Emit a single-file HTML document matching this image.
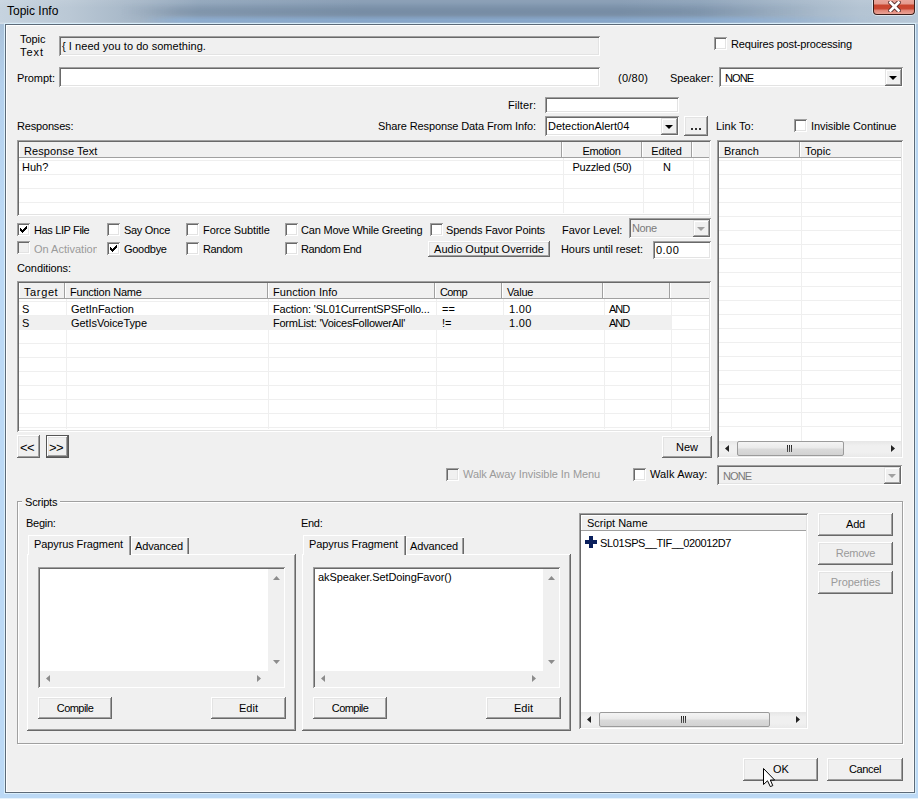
<!DOCTYPE html>
<html><head><meta charset="utf-8">
<style>
*{margin:0;padding:0;box-sizing:border-box}
html,body{width:918px;height:799px;overflow:hidden;background:#a9c4e0}
body{position:relative;font-family:"Liberation Sans",sans-serif;font-size:11px;color:#000}
.a{position:absolute}
.t{position:absolute;white-space:nowrap;line-height:13px;font-size:11px;color:#000}
.t.dis{color:#9a9a9a}
.t.gt{color:#7a7a7a}
.sunk{position:absolute;background:#fff;box-shadow:inset 1px 1px 0 #a0a0a0,inset -1px -1px 0 #fff,inset 2px 2px 0 #696969,inset -2px -2px 0 #e3e3e3}
.btn{position:absolute;background:#f0f0f0;box-shadow:inset -1px -1px 0 #696969,inset 1px 1px 0 #fff,inset -2px -2px 0 #a0a0a0,inset 2px 2px 0 #e3e3e3}
.btn.def{box-shadow:inset -1px -1px 0 #555,inset 1px 1px 0 #555,inset -2px -2px 0 #696969,inset 2px 2px 0 #fff,inset -3px -3px 0 #a0a0a0,inset 3px 3px 0 #e3e3e3}
.cb{position:absolute;width:13px;height:13px;background:#fff;box-shadow:inset 1px 1px 0 #a0a0a0,inset -1px -1px 0 #fff,inset 2px 2px 0 #696969,inset -2px -2px 0 #e3e3e3}
.cb.d{background:#f0f0f0}
.ddb{position:absolute;background:#f0f0f0;box-shadow:inset -1px -1px 0 #696969,inset 1px 1px 0 #e3e3e3,inset -2px -2px 0 #a0a0a0,inset 2px 2px 0 #fff}
.arr{position:absolute;width:0;height:0;border-left:4px solid transparent;border-right:4px solid transparent;border-top:4px solid #000}
.gh{position:absolute;height:1px;background:#efefef}
.gv{position:absolute;width:1px;background:#efefef}
.raised{position:absolute;box-shadow:inset -1px -1px 0 #696969,inset 1px 1px 0 #fff,inset -2px -2px 0 #a0a0a0}
</style></head><body>

<div class="a" style="left:0;top:0;width:918px;height:24px;background:linear-gradient(90deg,#c6d3df 0px,#bac8d5 70px,#a4b5c6 140px,#8ea3b9 200px,#8399b1 360px,#8399b1 620px,#8aa0b7 700px,#9fb2c5 780px,#b4c4d3 860px,#b6c7d7 918px)"></div>
<div class="a" style="left:120px;top:3px;width:730px;height:17px;background:linear-gradient(90deg,rgba(50,70,95,0) 0px,rgba(50,70,95,0.14) 60px,rgba(50,70,95,0.14) 560px,rgba(50,70,95,0) 700px);-webkit-mask-image:linear-gradient(180deg,transparent,#000 45%,#000 60%,transparent)"></div>
<div class="a" style="left:140px;top:15px;width:770px;height:9px;background:linear-gradient(90deg,rgba(140,180,225,0) 0px,rgba(140,180,225,0.5) 40px,rgba(140,180,225,0.5) 600px,rgba(140,180,225,0) 740px);-webkit-mask-image:linear-gradient(180deg,transparent,#000 50%,#000 80%,transparent)"></div>
<div class="a" style="left:0;top:0;width:918px;height:24px;background:linear-gradient(180deg,rgba(255,255,255,0.08) 0px,rgba(255,255,255,0) 8px,rgba(255,255,255,0) 22px,rgba(255,255,255,0.25) 23px)"></div>
<div class="t" style="left:7px;top:4px;font-size:12px;line-height:15px">Topic Info</div>
<div class="a" style="left:872px;top:-1px;width:44px;height:17px;border-radius:0 0 5px 5px;background:rgba(255,255,255,0.55)"></div>
<div class="a" style="left:873px;top:-1px;width:42px;height:16px;border:1px solid #3a1c18;border-top:none;border-radius:0 0 4px 4px;background:linear-gradient(180deg,#eba99e 0px,#e49a8e 5px,#c9452e 6px,#cb4833 10px,#df8272 11px,#eba396 15px)"></div>
<svg class="a" style="left:888px;top:1px" width="13" height="11" viewBox="0 0 13 11"><path d="M2.5 1.5 L10.5 9.5 M10.5 1.5 L2.5 9.5" stroke="#4a2020" stroke-width="4.4" stroke-linecap="square"/><path d="M2.5 1.5 L10.5 9.5 M10.5 1.5 L2.5 9.5" stroke="#fff" stroke-width="2.8" stroke-linecap="square"/></svg>
<div class="a" style="left:0;top:24px;width:918px;height:775px;background:linear-gradient(180deg,#aac2da 0px,#b4d0ec 60px,#bcd9f5 200px,#bcd9f5 775px)"></div>
<div class="a" style="left:4px;top:23px;width:912px;height:771px;border:1px solid #d9eefb"></div>
<div class="a" style="left:0;top:798px;width:918px;height:1px;background:#e6f3fc"></div>
<div class="a" style="left:5px;top:24px;width:910px;height:769px;background:#f0f0f0;border:1px solid #5c6a78;box-shadow:inset 1px 1px 0 #fff,inset -1px -1px 0 #fafafa"></div>
<div class="t " style="left:20px;top:33px;letter-spacing:-0.05px">Topic</div>
<div class="t " style="left:20px;top:46px;letter-spacing:0.94px">Text</div>
<div class="sunk" style="left:59px;top:36px;width:541px;height:20px;background:#f0f0f0;"></div>
<div class="t " style="left:62px;top:40px;letter-spacing:0.05px">{ I need you to do something.</div>
<div class="cb" style="left:714px;top:37px"></div>
<div class="t " style="left:731px;top:38px;letter-spacing:-0.16px">Requires post-processing</div>
<div class="t " style="left:17px;top:72px;letter-spacing:-0.09px">Prompt:</div>
<div class="sunk" style="left:59px;top:67px;width:541px;height:20px;background:#fff;"></div>
<div class="t " style="left:618px;top:72px;letter-spacing:0.25px">(0/80)</div>
<div class="t " style="left:670px;top:72px;letter-spacing:-0.08px">Speaker:</div>
<div class="sunk" style="left:719px;top:67px;width:184px;height:20px;background:#fff;"></div>
<div class="t " style="left:725px;top:72px;letter-spacing:-0.93px">NONE</div>
<div class="ddb" style="left:885px;top:69px;width:17px;height:17px"></div>
<div class="arr" style="left:889px;top:76px;border-top-color:#000"></div>
<div class="t " style="left:508px;top:99px;letter-spacing:0.08px">Filter:</div>
<div class="sunk" style="left:545px;top:97px;width:134px;height:16px;background:#fff;"></div>
<div class="t " style="left:17px;top:120px;letter-spacing:-0.18px">Responses:</div>
<div class="t " style="left:378px;top:120px;letter-spacing:-0.12px">Share Response Data From Info:</div>
<div class="sunk" style="left:545px;top:116px;width:134px;height:20px;background:#fff;"></div>
<div class="t " style="left:548px;top:120px;">DetectionAlert04</div>
<div class="ddb" style="left:661px;top:118px;width:17px;height:17px"></div>
<div class="arr" style="left:665px;top:125px;border-top-color:#000"></div>
<div class="btn" style="left:684px;top:116px;width:24px;height:20px"></div>
<div class="a" style="left:691px;top:128px;width:2px;height:2px;background:#333"></div>
<div class="a" style="left:695px;top:128px;width:2px;height:2px;background:#333"></div>
<div class="a" style="left:699px;top:128px;width:2px;height:2px;background:#333"></div>
<div class="t " style="left:716px;top:120px;">Link To:</div>
<div class="cb" style="left:794px;top:119px"></div>
<div class="t " style="left:811px;top:120px;letter-spacing:-0.08px">Invisible Continue</div>
<div class="sunk" style="left:17px;top:140px;width:694px;height:76px;background:#fff;"></div>
<div class="gh" style="left:19px;top:160px;width:690px"></div>
<div class="gh" style="left:19px;top:174px;width:690px"></div>
<div class="gh" style="left:19px;top:188px;width:690px"></div>
<div class="gh" style="left:19px;top:202px;width:690px"></div>
<div class="gv" style="left:563px;top:158px;height:55px"></div>
<div class="gv" style="left:643px;top:158px;height:55px"></div>
<div class="gv" style="left:693px;top:158px;height:55px"></div>
<div class="a" style="left:19px;top:142px;width:690px;height:16px;background:#f0f0f0;border-bottom:1px solid #a0a0a0;overflow:hidden">
<div class="a" style="left:0px;top:0;width:543px;height:15px;box-shadow:inset 1px 0 0 #fff,inset -1px 0 0 #a0a0a0"></div>
<div class="a" style="left:543px;top:0;width:80px;height:15px;box-shadow:inset 1px 0 0 #fff,inset -1px 0 0 #a0a0a0"></div>
<div class="a" style="left:623px;top:0;width:50px;height:15px;box-shadow:inset 1px 0 0 #fff,inset -1px 0 0 #a0a0a0"></div>
<div class="a" style="left:673px;top:0;width:21px;height:15px;box-shadow:inset 1px 0 0 #fff,inset -1px 0 0 #a0a0a0"></div>
</div>
<div class="t " style="left:24px;top:145px;letter-spacing:0.07px">Response Text</div>
<div class="t " style="left:562px;width:79px;text-align:center;top:145px;letter-spacing:-0.33px;padding-left:-0.33px">Emotion</div>
<div class="t " style="left:642px;width:49px;text-align:center;top:145px;letter-spacing:-0.10px;padding-left:-0.10px">Edited</div>
<div class="t " style="left:22px;top:161px;">Huh?</div>
<div class="t " style="left:562px;width:80px;text-align:center;top:161px;letter-spacing:-0.22px;padding-left:-0.22px">Puzzled (50)</div>
<div class="t " style="left:642px;width:50px;text-align:center;top:161px;">N</div>
<div class="sunk" style="left:717px;top:140px;width:186px;height:318px;background:#fff;"></div>
<div class="gh" style="left:719px;top:160px;width:182px"></div>
<div class="gh" style="left:719px;top:174px;width:182px"></div>
<div class="gh" style="left:719px;top:188px;width:182px"></div>
<div class="gh" style="left:719px;top:202px;width:182px"></div>
<div class="gh" style="left:719px;top:216px;width:182px"></div>
<div class="gh" style="left:719px;top:230px;width:182px"></div>
<div class="gh" style="left:719px;top:244px;width:182px"></div>
<div class="gh" style="left:719px;top:258px;width:182px"></div>
<div class="gh" style="left:719px;top:272px;width:182px"></div>
<div class="gh" style="left:719px;top:286px;width:182px"></div>
<div class="gh" style="left:719px;top:300px;width:182px"></div>
<div class="gh" style="left:719px;top:314px;width:182px"></div>
<div class="gh" style="left:719px;top:328px;width:182px"></div>
<div class="gh" style="left:719px;top:342px;width:182px"></div>
<div class="gh" style="left:719px;top:356px;width:182px"></div>
<div class="gh" style="left:719px;top:370px;width:182px"></div>
<div class="gh" style="left:719px;top:384px;width:182px"></div>
<div class="gh" style="left:719px;top:398px;width:182px"></div>
<div class="gh" style="left:719px;top:412px;width:182px"></div>
<div class="gh" style="left:719px;top:426px;width:182px"></div>
<div class="gv" style="left:801px;top:158px;height:283px"></div>
<div class="a" style="left:719px;top:142px;width:182px;height:16px;background:#f0f0f0;border-bottom:1px solid #a0a0a0;overflow:hidden">
<div class="a" style="left:0px;top:0;width:81px;height:15px;box-shadow:inset 1px 0 0 #fff,inset -1px 0 0 #a0a0a0"></div>
<div class="a" style="left:81px;top:0;width:105px;height:15px;box-shadow:inset 1px 0 0 #fff,inset -1px 0 0 #a0a0a0"></div>
</div>
<div class="t " style="left:724px;top:145px;">Branch</div>
<div class="t " style="left:805px;top:145px;">Topic</div>
<div class="a" style="left:719px;top:441px;width:182px;height:16px;background:linear-gradient(180deg,#e6e6e6,#f0f0f0 30%,#f0f0f0 70%,#e9e9e9)"></div>
<svg class="a" style="left:725px;top:445px" width="4" height="7"><path d="M4 0 L0 3.5 L4 7 Z" fill="#222"/></svg>
<svg class="a" style="left:891px;top:445px" width="4" height="7"><path d="M0 0 L4 3.5 L0 7 Z" fill="#222"/></svg>
<div class="a" style="left:737px;top:441px;width:107px;height:15px;border:1px solid #9b9b9b;border-radius:2px;background:linear-gradient(180deg,#f4f4f4,#eaeaea 45%,#dadada 55%,#d2d2d2)"></div>
<div class="a" style="left:787px;top:445px;width:1px;height:7px;background:linear-gradient(180deg,#222,#555)"></div>
<div class="a" style="left:789px;top:445px;width:1px;height:7px;background:linear-gradient(180deg,#222,#555)"></div>
<div class="a" style="left:791px;top:445px;width:1px;height:7px;background:linear-gradient(180deg,#222,#555)"></div>
<div class="cb" style="left:17px;top:223px"></div>
<svg class="a" style="left:20px;top:226px" width="7" height="7" viewBox="0 0 7 7" shape-rendering="crispEdges"><path d="M6 0h1v3h-1z M5 1h1v3h-1z M4 2h1v3h-1z M3 3h1v3h-1z M2 4h1v3h-1z M1 3h1v3h-1z M0 2h1v3h-1z" fill="#000"/></svg>
<div class="t " style="left:34px;top:224px;letter-spacing:-0.37px">Has LIP File</div>
<div class="cb" style="left:107px;top:223px"></div>
<div class="t " style="left:124px;top:224px;letter-spacing:-0.29px">Say Once</div>
<div class="cb" style="left:186px;top:223px"></div>
<div class="t " style="left:203px;top:224px;letter-spacing:-0.08px">Force Subtitle</div>
<div class="cb" style="left:285px;top:223px"></div>
<div class="t " style="left:301px;top:224px;letter-spacing:-0.20px">Can Move While Greeting</div>
<div class="cb" style="left:430px;top:223px"></div>
<div class="t " style="left:446px;top:224px;letter-spacing:-0.17px">Spends Favor Points</div>
<div class="t " style="left:562px;top:224px;letter-spacing:-0.01px">Favor Level:</div>
<div class="sunk" style="left:629px;top:218px;width:82px;height:20px;background:#f0f0f0;"></div>
<div class="t gt" style="left:632px;top:222px;letter-spacing:-0.43px">None</div>
<div class="ddb" style="left:693px;top:220px;width:17px;height:17px"></div>
<div class="arr" style="left:697px;top:227px;border-top-color:#a0a0a0"></div>
<div class="cb d" style="left:17px;top:241px"></div>
<div class="t dis" style="left:34px;top:243px;width:63px;overflow:hidden;">On Activation</div>
<div class="cb" style="left:107px;top:242px"></div>
<svg class="a" style="left:110px;top:245px" width="7" height="7" viewBox="0 0 7 7" shape-rendering="crispEdges"><path d="M6 0h1v3h-1z M5 1h1v3h-1z M4 2h1v3h-1z M3 3h1v3h-1z M2 4h1v3h-1z M1 3h1v3h-1z M0 2h1v3h-1z" fill="#000"/></svg>
<div class="t " style="left:124px;top:243px;letter-spacing:-0.28px">Goodbye</div>
<div class="cb" style="left:186px;top:242px"></div>
<div class="t " style="left:203px;top:243px;letter-spacing:-0.40px">Random</div>
<div class="cb" style="left:285px;top:242px"></div>
<div class="t " style="left:301px;top:243px;letter-spacing:-0.39px">Random End</div>
<div class="btn" style="left:428px;top:241px;width:122px;height:16px"></div>
<div class="t " style="left:428px;width:122px;text-align:center;top:243px;letter-spacing:0.02px;padding-left:0.02px">Audio Output Override</div>
<div class="t " style="left:561px;top:243px;letter-spacing:-0.07px">Hours until reset:</div>
<div class="sunk" style="left:653px;top:241px;width:58px;height:18px;background:#fff;"></div>
<div class="t " style="left:656px;top:244px;letter-spacing:0.46px">0.00</div>
<div class="t " style="left:17px;top:262px;letter-spacing:-0.10px">Conditions:</div>
<div class="sunk" style="left:17px;top:281px;width:694px;height:151px;background:#fff;"></div>
<div class="gh" style="left:19px;top:301px;width:690px"></div>
<div class="gh" style="left:19px;top:315px;width:690px"></div>
<div class="gh" style="left:19px;top:329px;width:690px"></div>
<div class="gh" style="left:19px;top:343px;width:690px"></div>
<div class="gh" style="left:19px;top:357px;width:690px"></div>
<div class="gh" style="left:19px;top:371px;width:690px"></div>
<div class="gh" style="left:19px;top:385px;width:690px"></div>
<div class="gh" style="left:19px;top:399px;width:690px"></div>
<div class="gh" style="left:19px;top:413px;width:690px"></div>
<div class="gh" style="left:19px;top:427px;width:690px"></div>
<div class="gv" style="left:66px;top:299px;height:130px"></div>
<div class="gv" style="left:268px;top:299px;height:130px"></div>
<div class="gv" style="left:436px;top:299px;height:130px"></div>
<div class="gv" style="left:503px;top:299px;height:130px"></div>
<div class="gv" style="left:604px;top:299px;height:130px"></div>
<div class="gv" style="left:671px;top:299px;height:130px"></div>
<div class="a" style="left:19px;top:316px;width:652px;height:14px;background:#f0f0f0"></div>
<div class="a" style="left:19px;top:283px;width:690px;height:16px;background:#f0f0f0;border-bottom:1px solid #a0a0a0;overflow:hidden">
<div class="a" style="left:0px;top:0;width:46px;height:15px;box-shadow:inset 1px 0 0 #fff,inset -1px 0 0 #a0a0a0"></div>
<div class="a" style="left:46px;top:0;width:203px;height:15px;box-shadow:inset 1px 0 0 #fff,inset -1px 0 0 #a0a0a0"></div>
<div class="a" style="left:249px;top:0;width:167px;height:15px;box-shadow:inset 1px 0 0 #fff,inset -1px 0 0 #a0a0a0"></div>
<div class="a" style="left:416px;top:0;width:67px;height:15px;box-shadow:inset 1px 0 0 #fff,inset -1px 0 0 #a0a0a0"></div>
<div class="a" style="left:483px;top:0;width:101px;height:15px;box-shadow:inset 1px 0 0 #fff,inset -1px 0 0 #a0a0a0"></div>
<div class="a" style="left:584px;top:0;width:67px;height:15px;box-shadow:inset 1px 0 0 #fff,inset -1px 0 0 #a0a0a0"></div>
<div class="a" style="left:651px;top:0;width:43px;height:15px;box-shadow:inset 1px 0 0 #fff,inset -1px 0 0 #a0a0a0"></div>
</div>
<div class="t " style="left:24px;top:286px;letter-spacing:0.62px">Target</div>
<div class="t " style="left:70px;top:286px;letter-spacing:-0.23px">Function Name</div>
<div class="t " style="left:273px;top:286px;letter-spacing:0.07px">Function Info</div>
<div class="t " style="left:440px;top:286px;letter-spacing:-0.61px">Comp</div>
<div class="t " style="left:507px;top:286px;letter-spacing:-0.21px">Value</div>
<div class="t " style="left:22px;top:303px;">S</div>
<div class="t " style="left:71px;top:303px;letter-spacing:0.00px">GetInFaction</div>
<div class="t " style="left:273px;top:303px;letter-spacing:-0.16px">Faction: 'SL01CurrentSPSFollo...</div>
<div class="t " style="left:442px;top:303px;">==</div>
<div class="t " style="left:509px;top:303px;letter-spacing:0.29px">1.00</div>
<div class="t " style="left:609px;top:303px;letter-spacing:-0.97px">AND</div>
<div class="t " style="left:22px;top:317px;">S</div>
<div class="t " style="left:71px;top:317px;letter-spacing:-0.08px">GetIsVoiceType</div>
<div class="t " style="left:273px;top:317px;letter-spacing:-0.25px">FormList: 'VoicesFollowerAll'</div>
<div class="t " style="left:442px;top:317px;">!=</div>
<div class="t " style="left:509px;top:317px;letter-spacing:0.29px">1.00</div>
<div class="t " style="left:609px;top:317px;letter-spacing:-0.97px">AND</div>
<div class="btn" style="left:17px;top:435px;width:23px;height:23px"></div>
<div class="t " style="left:17px;width:23px;text-align:center;top:441px;"></div>
<div class="t " style="left:20px;top:441px;font-size:13px;letter-spacing:-0.5px;">&lt;&lt;</div>
<div class="btn def" style="left:46px;top:435px;width:23px;height:23px"></div>
<div class="t " style="left:46px;width:23px;text-align:center;top:441px;"></div>
<div class="t " style="left:49px;top:441px;font-size:13px;letter-spacing:-0.5px;">&gt;&gt;</div>
<div class="btn" style="left:662px;top:436px;width:50px;height:22px"></div>
<div class="t " style="left:662px;width:50px;text-align:center;top:441px;">New</div>
<div class="cb d" style="left:446px;top:468px"></div>
<div class="t dis" style="left:463px;top:468px;letter-spacing:-0.06px">Walk Away Invisible In Menu</div>
<div class="cb" style="left:633px;top:468px"></div>
<div class="t " style="left:650px;top:468px;letter-spacing:0.13px">Walk Away:</div>
<div class="sunk" style="left:717px;top:465px;width:185px;height:20px;background:#f0f0f0;"></div>
<div class="t gt" style="left:723px;top:470px;letter-spacing:-0.93px">NONE</div>
<div class="ddb" style="left:884px;top:467px;width:17px;height:17px"></div>
<div class="arr" style="left:888px;top:474px;border-top-color:#a0a0a0"></div>
<div class="a" style="left:17px;top:501px;width:886px;height:243px;border:1px solid #a0a0a0;box-shadow:1px 1px 0 #fff,inset 1px 1px 0 #fff"></div>
<div class="a" style="left:22px;top:495px;width:38px;height:13px;background:#f0f0f0"></div>
<div class="t " style="left:25px;top:496px;letter-spacing:-0.20px">Scripts</div>
<div class="t " style="left:26px;top:517px;letter-spacing:-0.28px">Begin:</div>
<div class="raised" style="left:27px;top:554px;width:269px;height:177px;background:#f0f0f0"></div>
<div class="a" style="left:28px;top:535px;width:103px;height:20px;background:#f0f0f0;box-shadow:inset 1px 1px 0 #fff,inset -1px 0 0 #696969,inset -2px 0 0 #a0a0a0"></div>
<div class="t " style="left:34px;top:538px;letter-spacing:-0.10px">Papyrus Fragment</div>
<div class="a" style="left:131px;top:537px;width:58px;height:17px;background:#f0f0f0;box-shadow:inset 1px 1px 0 #fff,inset -1px 0 0 #696969,inset -2px 0 0 #a0a0a0"></div>
<div class="t " style="left:135px;top:540px;letter-spacing:-0.13px">Advanced</div>
<div class="sunk" style="left:38px;top:567px;width:247px;height:121px;background:#fff;"></div>
<div class="a" style="left:268px;top:569px;width:16px;height:102px;background:#f0f0f0"></div>
<svg class="a" style="left:273px;top:576px" width="7" height="4"><path d="M0 4 L3.5 0 L7 4 Z" fill="#8c8c8c"/></svg>
<svg class="a" style="left:273px;top:660px" width="7" height="4"><path d="M0 0 L3.5 4 L7 0 Z" fill="#8c8c8c"/></svg>
<div class="a" style="left:40px;top:671px;width:244px;height:16px;background:#f0f0f0"></div>
<svg class="a" style="left:46px;top:675px" width="4" height="7"><path d="M4 0 L0 3.5 L4 7 Z" fill="#8c8c8c"/></svg>
<svg class="a" style="left:257px;top:675px" width="4" height="7"><path d="M0 0 L4 3.5 L0 7 Z" fill="#8c8c8c"/></svg>
<div class="btn" style="left:38px;top:697px;width:74px;height:22px"></div>
<div class="t " style="left:38px;width:74px;text-align:center;top:702px;letter-spacing:-0.56px;padding-left:-0.56px">Compile</div>
<div class="btn" style="left:211px;top:697px;width:75px;height:22px"></div>
<div class="t " style="left:211px;width:75px;text-align:center;top:702px;letter-spacing:0.01px;padding-left:0.01px">Edit</div>
<div class="t " style="left:301px;top:517px;letter-spacing:-0.31px">End:</div>
<div class="raised" style="left:302px;top:554px;width:269px;height:177px;background:#f0f0f0"></div>
<div class="a" style="left:303px;top:535px;width:103px;height:20px;background:#f0f0f0;box-shadow:inset 1px 1px 0 #fff,inset -1px 0 0 #696969,inset -2px 0 0 #a0a0a0"></div>
<div class="t " style="left:309px;top:538px;letter-spacing:-0.10px">Papyrus Fragment</div>
<div class="a" style="left:406px;top:537px;width:58px;height:17px;background:#f0f0f0;box-shadow:inset 1px 1px 0 #fff,inset -1px 0 0 #696969,inset -2px 0 0 #a0a0a0"></div>
<div class="t " style="left:410px;top:540px;letter-spacing:-0.13px">Advanced</div>
<div class="sunk" style="left:313px;top:567px;width:247px;height:121px;background:#fff;"></div>
<div class="a" style="left:543px;top:569px;width:16px;height:102px;background:#f0f0f0"></div>
<svg class="a" style="left:548px;top:576px" width="7" height="4"><path d="M0 4 L3.5 0 L7 4 Z" fill="#8c8c8c"/></svg>
<svg class="a" style="left:548px;top:660px" width="7" height="4"><path d="M0 0 L3.5 4 L7 0 Z" fill="#8c8c8c"/></svg>
<div class="a" style="left:315px;top:671px;width:244px;height:16px;background:#f0f0f0"></div>
<svg class="a" style="left:321px;top:675px" width="4" height="7"><path d="M4 0 L0 3.5 L4 7 Z" fill="#8c8c8c"/></svg>
<svg class="a" style="left:532px;top:675px" width="4" height="7"><path d="M0 0 L4 3.5 L0 7 Z" fill="#8c8c8c"/></svg>
<div class="t " style="left:318px;top:571px;letter-spacing:-0.09px">akSpeaker.SetDoingFavor()</div>
<div class="btn" style="left:313px;top:697px;width:74px;height:22px"></div>
<div class="t " style="left:313px;width:74px;text-align:center;top:702px;letter-spacing:-0.56px;padding-left:-0.56px">Compile</div>
<div class="btn" style="left:486px;top:697px;width:75px;height:22px"></div>
<div class="t " style="left:486px;width:75px;text-align:center;top:702px;letter-spacing:0.01px;padding-left:0.01px">Edit</div>
<div class="sunk" style="left:579px;top:513px;width:229px;height:216px;background:#fff;"></div>
<div class="a" style="left:581px;top:515px;width:225px;height:16px;background:#f0f0f0;border-bottom:1px solid #a0a0a0;box-shadow:inset 1px 1px 0 #fff"></div>
<div class="t " style="left:587px;top:517px;">Script Name</div>
<svg class="a" style="left:585px;top:536px" width="12" height="12" viewBox="0 0 12 12"><path d="M4 0 H8 V4 H12 V8 H8 V12 H4 V8 H0 V4 H4 Z" fill="#0a1f5c"/></svg>
<div class="t " style="left:600px;top:537px;letter-spacing:-0.38px">SL01SPS__TIF__020012D7</div>
<div class="a" style="left:581px;top:712px;width:225px;height:16px;background:linear-gradient(180deg,#e6e6e6,#f0f0f0 30%,#f0f0f0 70%,#e9e9e9)"></div>
<svg class="a" style="left:587px;top:716px" width="4" height="7"><path d="M4 0 L0 3.5 L4 7 Z" fill="#222"/></svg>
<svg class="a" style="left:796px;top:716px" width="4" height="7"><path d="M0 0 L4 3.5 L0 7 Z" fill="#222"/></svg>
<div class="a" style="left:599px;top:712px;width:171px;height:15px;border:1px solid #9b9b9b;border-radius:2px;background:linear-gradient(180deg,#f4f4f4,#eaeaea 45%,#dadada 55%,#d2d2d2)"></div>
<div class="a" style="left:681px;top:716px;width:1px;height:7px;background:linear-gradient(180deg,#222,#555)"></div>
<div class="a" style="left:683px;top:716px;width:1px;height:7px;background:linear-gradient(180deg,#222,#555)"></div>
<div class="a" style="left:685px;top:716px;width:1px;height:7px;background:linear-gradient(180deg,#222,#555)"></div>
<div class="btn" style="left:818px;top:513px;width:75px;height:23px"></div>
<div class="t " style="left:818px;width:75px;text-align:center;top:518px;letter-spacing:-0.19px;padding-left:-0.19px">Add</div>
<div class="btn" style="left:818px;top:542px;width:75px;height:23px"></div>
<div class="t dis" style="left:818px;width:75px;text-align:center;top:547px;letter-spacing:-0.27px;padding-left:-0.27px">Remove</div>
<div class="btn" style="left:818px;top:571px;width:75px;height:23px"></div>
<div class="t dis" style="left:818px;width:75px;text-align:center;top:576px;letter-spacing:-0.08px;padding-left:-0.08px">Properties</div>
<div class="btn" style="left:743px;top:758px;width:75px;height:23px"></div>
<div class="t " style="left:773px;top:763px;">OK</div>
<div class="btn" style="left:827px;top:758px;width:76px;height:23px"></div>
<div class="t " style="left:827px;width:76px;text-align:center;top:763px;letter-spacing:-0.35px;padding-left:-0.35px">Cancel</div>
<svg class="a" style="left:763px;top:768px" width="14" height="20" viewBox="0 0 14 20"><path d="M0.5 0.5 V16.5 L4.5 12.8 L7.3 18.6 L9.8 17.6 L7.3 12 H11.6 Z" fill="#fff" stroke="#000" stroke-width="1" stroke-linejoin="miter"/></svg>
</body></html>
